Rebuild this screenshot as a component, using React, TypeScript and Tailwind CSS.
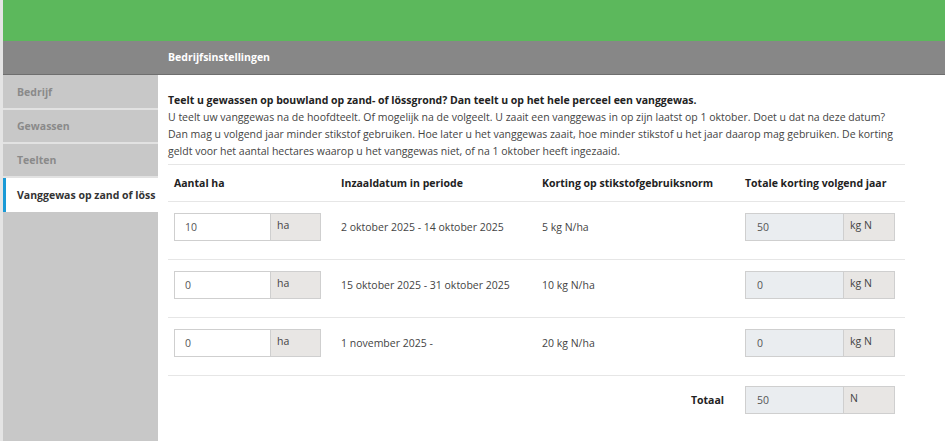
import React from "react";

type Row = {
  ha: string;
  period: string;
  norm: string;
  total: string;
};

const rows: Row[] = [
  { ha: "10", period: "2 oktober 2025 - 14 oktober 2025", norm: "5 kg N/ha", total: "50" },
  { ha: "0", period: "15 oktober 2025 - 31 oktober 2025", norm: "10 kg N/ha", total: "0" },
  { ha: "0", period: "1 november 2025 -", norm: "20 kg N/ha", total: "0" },
];

const menu = ["Bedrijf", "Gewassen", "Teelten"];

function AddonInput({
  value,
  unit,
  readOnly,
}: {
  value: string;
  unit: string;
  readOnly?: boolean;
}) {
  return (
    <div className="flex h-[28px] w-fit border border-[#cfcfcf]">
      <div
        className={
          readOnly
            ? "flex w-[97px] items-center bg-[#eaedf0] pl-[11px] text-[#555]"
            : "flex w-[95px] items-center bg-white pl-[10px] text-[#555]"
        }
      >
        {value}
      </div>
      <div
        className={
          readOnly
            ? "w-[51px] border-l border-[#cfcfcf] bg-[#e8e6e4] pl-[6px] pt-[3px] text-[#444]"
            : "w-[50px] border-l border-[#cfcfcf] bg-[#e8e6e4] pl-[6px] pt-[3px] text-[#444]"
        }
      >
        {unit}
      </div>
    </div>
  );
}

export default function App() {
  return (
    <div className="flex h-[441px] w-[945px] flex-col overflow-hidden bg-[#e4e4e4] pl-[3px] font-['Open_Sans',sans-serif] text-[10.5px] leading-[17px] text-[#333]">
      <div className="h-[41px] shrink-0 bg-[#5cb85c]" />
      <div className="flex h-[34px] shrink-0 items-center border-b border-[#6e6e6e] bg-[#878787] pl-[165px] font-bold text-white">
        Bedrijfsinstellingen
      </div>

      <div className="flex flex-1">
        <aside className="w-[155px] shrink-0 bg-[#c8c8c8] pt-px">
          {menu.map((item) => (
            <div
              key={item}
              className="flex h-[34px] items-center border-b-2 border-[#e2e2e2] pl-[14px] font-bold text-[#8a8a8a]"
            >
              {item}
            </div>
          ))}
          <div className="flex h-[34px] items-center whitespace-nowrap border-l-[3px] border-[#1a9ad6] bg-white pl-[11px] font-bold text-[#333]">
            Vanggewas op zand of löss
          </div>
        </aside>

        <main className="flex-1 bg-white pl-[10px] pr-[40px] pt-[17px]">
          <p className="font-bold text-[#222]">
            Teelt u gewassen op bouwland op zand- of lössgrond? Dan teelt u op het hele perceel een vanggewas.
          </p>
          <p className="text-[#444]">
            U teelt uw vanggewas na de hoofdteelt. Of mogelijk na de volgeelt. U zaait een vanggewas in op zijn laatst op 1 oktober. Doet u dat na deze datum? Dan mag u volgend jaar minder stikstof gebruiken. Hoe later u het vanggewas zaait, hoe minder stikstof u het jaar daarop mag gebruiken. De korting geldt voor het aantal hectares waarop u het vanggewas niet, of na 1 oktober heeft ingezaaid.
          </p>

          <div className="mt-[4px] w-[737px]">
            <div className="grid h-[38px] grid-cols-[167px_201px_203px_166px] items-center border-y border-[#e6e6e6] font-bold text-[#222]">
              <div className="pl-[6px]">Aantal ha</div>
              <div className="pl-[6px]">Inzaaldatum in periode</div>
              <div className="pl-[6px]">Korting op stikstofgebruiksnorm</div>
              <div className="pl-[6px]">Totale korting volgend jaar</div>
            </div>

            {rows.map((row, i) => (
              <div
                key={i}
                className="grid grid-cols-[167px_201px_203px_166px] items-center border-b border-[#e6e6e6] pb-[18px] pt-[11px] text-[#444]"
              >
                <div className="pl-[6px]">
                  <AddonInput value={row.ha} unit="ha" />
                </div>
                <div className="pl-[6px]">{row.period}</div>
                <div className="pl-[6px]">{row.norm}</div>
                <div className="pl-[6px]">
                  <AddonInput value={row.total} unit="kg N" readOnly />
                </div>
              </div>
            ))}

            <div className="grid grid-cols-[571px_166px] items-center pt-[10px]">
              <div className="pr-[15px] text-right font-bold text-[#222]">Totaal</div>
              <div className="pl-[6px]">
                <AddonInput value="50" unit="N" readOnly />
              </div>
            </div>
          </div>
        </main>
      </div>
    </div>
  );
}
